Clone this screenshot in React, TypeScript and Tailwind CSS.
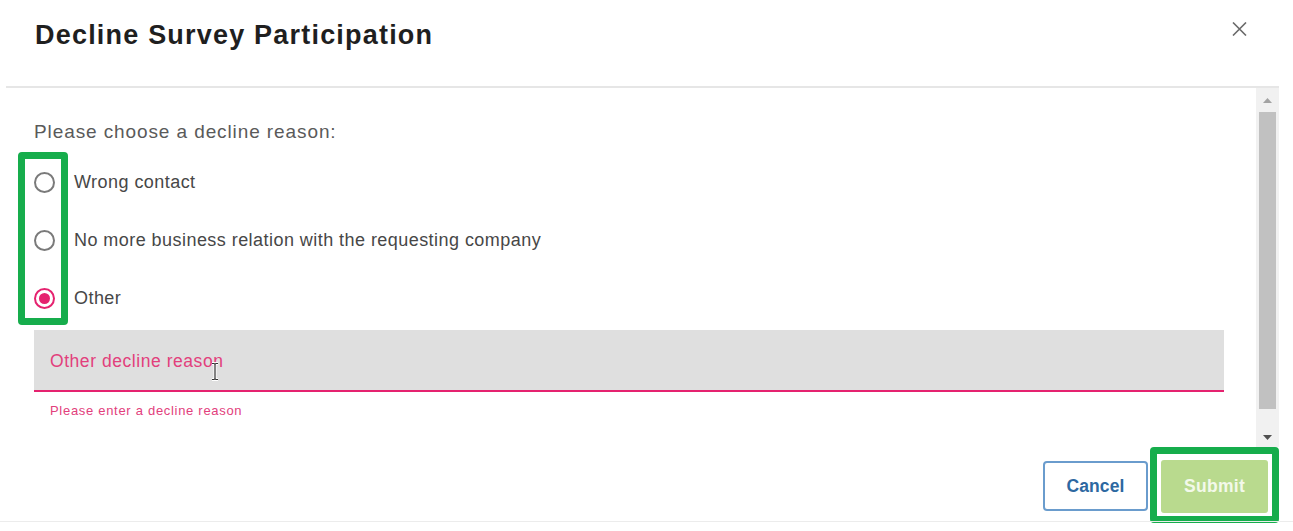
import React from "react";

function Radio({ checked }: { checked?: boolean }) {
  return checked ? (
    <div className="w-[21px] h-[21px] rounded-full border-2 border-[#e5226f] flex items-center justify-center shrink-0">
      <div className="w-[11px] h-[11px] rounded-full bg-[#e5226f]" />
    </div>
  ) : (
    <div className="w-[21px] h-[21px] rounded-full border-2 border-[#7a7a7a] shrink-0" />
  );
}

function Option({ label, checked }: { label: string; checked?: boolean }) {
  return (
    <div className="flex items-start h-[21px]">
      <Radio checked={checked} />
      <span className="ml-[19px] mt-[1px] text-[18px] leading-[18px] tracking-[0.45px] text-[#474747] whitespace-nowrap">
        {label}
      </span>
    </div>
  );
}

export default function App() {
  return (
    <div
      className="relative w-[1293px] h-[531px] bg-white overflow-hidden flex flex-col"
      style={{ fontFamily: "'Liberation Sans', Arial, sans-serif" }}
    >
      {/* Header */}
      <div className="h-[86px] flex justify-between pl-[35px] pr-[46px] shrink-0">
        <h1 className="mt-[22px] text-[27px] leading-[27px] font-bold tracking-[1.2px] text-[#1f1f1f] whitespace-nowrap">
          Decline Survey Participation
        </h1>
        <svg
          className="mt-[22px]"
          width="15"
          height="14"
          viewBox="0 0 15 14"
          fill="none"
          stroke="#6a6a6a"
          strokeWidth="1.6"
        >
          <path d="M1 0.5 L14 13.5 M14 0.5 L1 13.5" />
        </svg>
      </div>

      {/* Body */}
      <div className="ml-[6px] mr-[14px] border-t-2 border-[#e6e6e6] h-[361px] flex shrink-0">
        <div className="flex-1 pl-[28px] pr-[32px] pt-[34px] overflow-hidden">
          <p className="text-[19px] leading-[19px] tracking-[0.9px] text-[#5a5a5a] whitespace-nowrap">
            Please choose a decline reason:
          </p>
          <div className="mt-[31px] flex flex-col gap-[37px]">
            <Option label="Wrong contact" />
            <Option label="No more business relation with the requesting company" />
            <Option label="Other" checked />
          </div>
          <div className="mt-[21px] h-[62px] bg-[#dfdfdf] border-b-2 border-[#e5226f] flex items-center pl-[16px]">
            <span className="mt-[1px] text-[17.5px] leading-[18px] tracking-[0.55px] text-[#e2407c]">
              Other decline reason
            </span>
          </div>
          <p className="mt-[12px] pl-[16px] text-[13px] leading-[13px] tracking-[0.7px] text-[#e2407c]">
            Please enter a decline reason
          </p>
        </div>
        {/* Scrollbar */}
        <div className="w-[23px] bg-[#f1f1f1] flex flex-col items-center">
          <div className="h-[24px] flex items-center justify-center">
            <svg width="9" height="5" viewBox="0 0 9 5">
              <path d="M0 5 L4.5 0 L9 5 Z" fill="#a3a3a3" />
            </svg>
          </div>
          <div className="w-[17px] h-[297px] bg-[#c1c1c1]" />
          <div className="flex-1" />
          <div className="h-[20px] flex items-center justify-center">
            <svg width="9" height="5" viewBox="0 0 9 5">
              <path d="M0 0 L4.5 5 L9 0 Z" fill="#505050" />
            </svg>
          </div>
        </div>
      </div>

      {/* Footer */}
      <div className="h-[74px] flex justify-end items-start pr-[14px] gap-[2px] shrink-0">
        <button className="mt-[14px] w-[105px] h-[50px] rounded-[4px] border-2 border-[#6a9ccd] bg-white text-[17.5px] font-bold tracking-[0.1px] text-[#2d68a1]">
          Cancel
        </button>
        <div className="h-[76px] border-[7px] border-[#16ad4c] rounded-[4px] bg-white pl-[4px] pr-[4px] pt-[6px] pb-[3px]">
          <button className="w-[107px] h-[53px] rounded-[3px] bg-[#b9da8e] text-[17.5px] font-bold tracking-[0.3px] text-[#f3f9ea]">
            Submit
          </button>
        </div>
      </div>
      <div className="h-px bg-[#ececec] shrink-0" />
      <div className="flex-1" />

      {/* Green annotation frame around radios */}
      <div className="absolute left-[18px] top-[152px] w-[50px] h-[173px] border-[7px] border-[#16ad4c] rounded-[4px]" />

      {/* Text cursor */}
      <svg
        className="absolute left-[210px] top-[362px]"
        width="10"
        height="19"
        viewBox="0 0 10 19"
        fill="none"
      >
        <path
          d="M2 1.5 H4 Q5 1.5 5 3 V16 Q5 17.5 4 17.5 H2 M8 1.5 H6 Q5 1.5 5 3 M5 16 Q5 17.5 6 17.5 H8"
          stroke="#ffffff"
          strokeWidth="3"
        />
        <path
          d="M2 1.5 H4 Q5 1.5 5 3 V16 Q5 17.5 4 17.5 H2 M8 1.5 H6 Q5 1.5 5 3 M5 16 Q5 17.5 6 17.5 H8"
          stroke="#333333"
          strokeWidth="1.2"
        />
      </svg>
    </div>
  );
}
